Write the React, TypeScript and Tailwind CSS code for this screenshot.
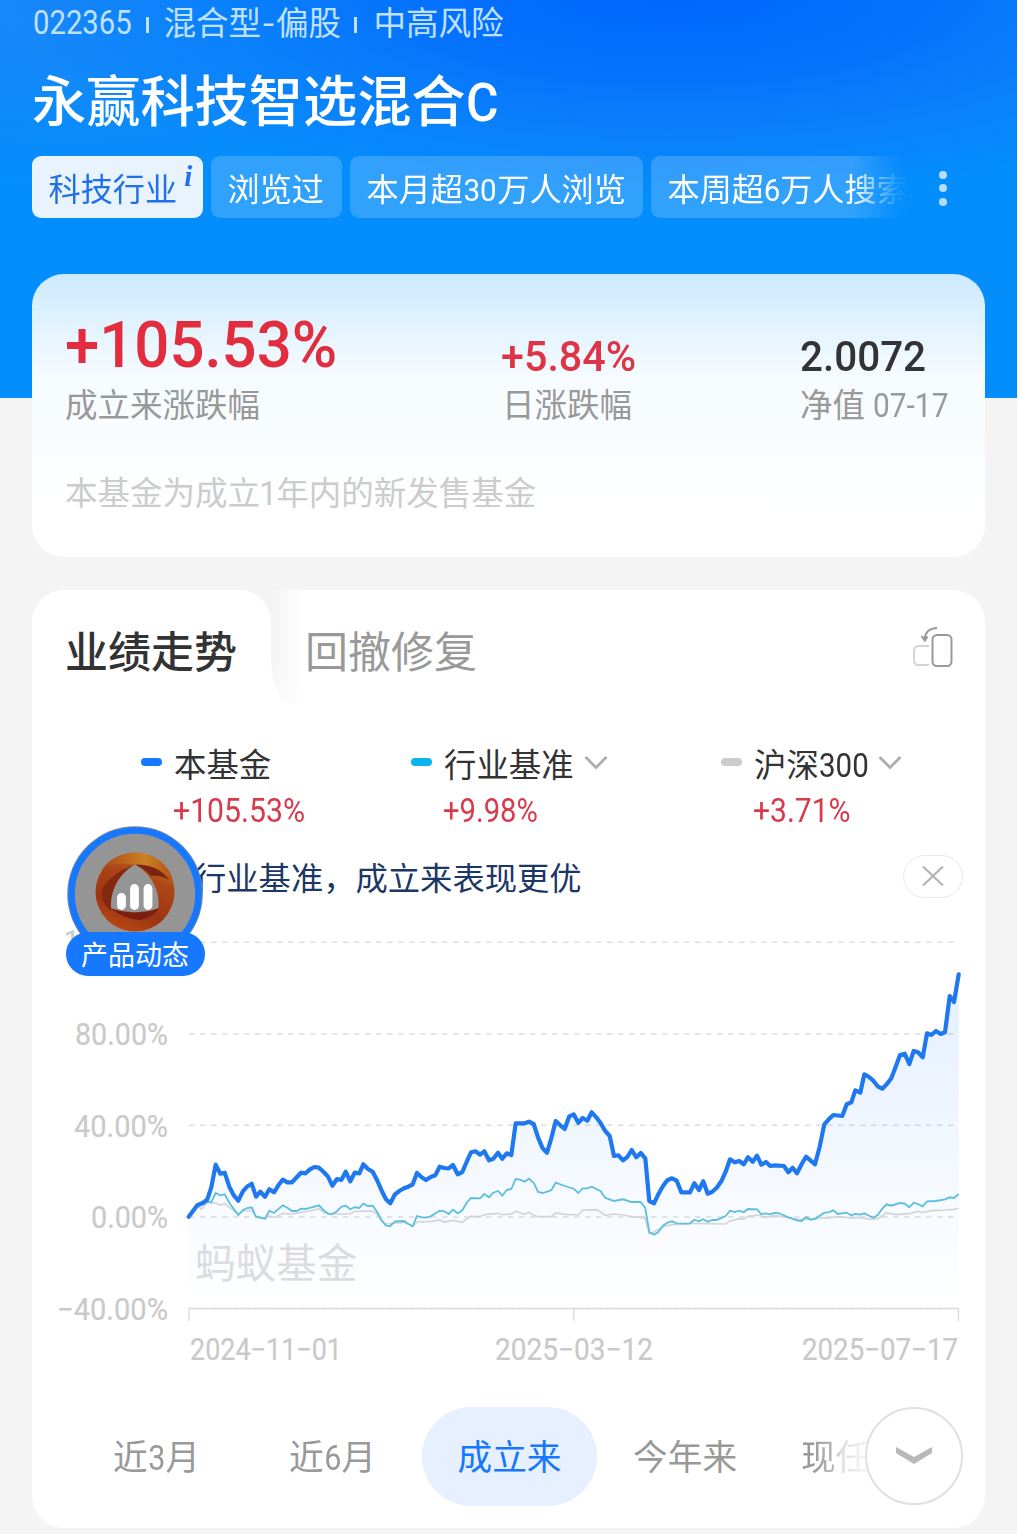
import React from "react";

type Pt = [number, number];

// Series are stored in thirds of a pixel, relative to the origin of each segment.
const seg = (ox: number, oy: number, pts: Pt[]): Pt[] =>
  pts.map(([x, y]) => [ox + x / 3, oy + y / 3]);

const fund: Pt[] = [
  ...seg(170, 1080, [[56,410],[82,376],[100,368],[112,358],[124,322],[137,254],[151,281],[164,278],[178,320],[192,347],[205,362],[218,335],[231,320],[245,311],[258,350],[271,335],[285,350],[298,328],[312,337],[325,316],[338,299],[352,307],[366,307],[380,292],[393,278],[406,280],[420,268],[433,261],[447,263],[461,276],[474,290],[487,317],[501,297],[514,300],[527,275],[541,304],[554,278],[568,280],[580,253],[594,267],[608,275],[621,300],[635,332],[648,358],[661,370],[675,343],[688,333],[702,325],[715,320],[728,313],[741,279],[755,292],[768,300]]),
  ...seg(430, 1080, [[2,291],[16,286],[29,260],[43,264],[56,265],[69,255],[83,283],[97,276],[110,245],[123,217],[137,214],[150,224],[163,214],[177,241],[190,236],[204,218],[217,236],[230,220],[244,225],[257,130],[284,130],[297,125],[311,132],[324,172],[338,205],[351,218],[364,175],[377,123],[391,136],[404,147],[418,109],[431,103],[445,128],[458,114],[472,122],[485,97],[499,112],[512,130],[525,152],[539,168],[552,228],[565,226],[579,241],[592,231],[605,210],[619,232],[632,219],[646,235],[658,363],[672,370],[685,343],[699,318],[712,301],[726,295],[740,302],[754,337],[778,337]]),
  ...seg(690, 950, [[0,727],[13,700],[27,720],[40,694],[53,731],[67,725],[80,713],[94,694],[107,665],[120,628],[134,637],[148,633],[161,643],[174,622],[188,635],[201,617],[214,644],[228,636],[241,648],[255,646],[282,648],[295,667],[308,653],[321,670],[335,642],[348,620],[362,632],[375,643],[389,590],[403,523],[416,508],[430,495],[457,498],[470,463],[484,457],[496,421],[511,428],[523,373],[537,381],[550,392],[563,409],[577,416],[590,403],[604,385],[617,350],[630,315],[644,311],[658,342],[671,303],[684,307],[698,322],[711,250],[724,255],[738,243],[752,252],[765,247],[779,138],[792,156],[806,73]]),
];

const industry: Pt[] = [
  ...seg(170, 1080, [[56,410],[82,378],[100,372],[112,365],[124,366],[137,339],[151,346],[164,343],[178,368],[205,405],[218,391],[231,384],[245,382],[258,410],[285,416],[298,392],[312,399],[338,376],[352,383],[366,393],[380,393],[393,386],[406,387],[447,376],[461,391],[474,401],[487,402],[501,394],[514,380],[527,377],[541,388],[554,382],[568,384],[580,371],[594,378],[608,377],[621,395],[635,421],[648,437],[661,438],[675,424],[702,423],[714,431],[728,439],[741,408],[755,412],[768,413]]),
  ...seg(430, 1080, [[2,409],[29,392],[43,394],[56,402],[69,389],[83,400],[97,391],[110,368],[123,354],[150,355],[163,342],[177,352],[190,338],[204,333],[217,347],[230,330],[244,327],[257,297],[270,299],[284,305],[297,296],[311,308],[324,336],[338,339],[364,331],[377,308],[404,318],[431,326],[445,339],[458,325],[472,325],[485,320],[512,334],[525,353],[552,363],[579,358],[605,366],[632,366],[646,384],[658,456],[672,464],[685,456],[699,437],[712,428],[726,424],[740,430],[776,431]]),
  ...seg(690, 950, [[0,820],[13,809],[27,814],[40,808],[53,815],[67,810],[80,810],[107,798],[120,782],[134,786],[148,782],[161,787],[174,777],[201,778],[214,793],[228,790],[241,793],[255,789],[268,790],[295,802],[321,811],[335,813],[348,801],[362,809],[375,806],[403,788],[416,787],[430,781],[443,792],[470,788],[484,796],[496,792],[511,794],[523,790],[537,797],[550,803],[563,795],[577,776],[590,763],[604,767],[630,759],[644,761],[658,772],[671,758],[684,762],[698,769],[711,754],[738,753],[765,748],[779,742],[792,744],[806,732]]),
];

const csi300: Pt[] = [
  ...seg(170, 1080, [[56,410],[82,378],[95,387],[112,368],[137,369],[151,375],[164,371],[178,382],[205,402],[218,393],[245,391],[258,410],[285,416],[298,408],[312,413],[338,400],[366,402],[393,397],[433,390],[447,386],[461,398],[487,402],[541,402],[554,394],[608,393],[621,403],[635,424],[648,432],[702,427],[728,438],[741,426],[768,425]]),
  ...seg(430, 1080, [[2,425],[29,420],[43,426],[69,421],[97,427],[110,417],[123,409],[150,410],[163,404],[204,400],[217,404],[244,402],[257,394],[284,403],[297,397],[311,406],[324,410],[364,410],[377,399],[404,403],[445,405],[458,390],[499,389],[512,396],[525,406],[552,402],[579,405],[605,410],[632,412],[646,416],[658,462],[672,456],[699,440],[726,434],[776,432]]),
  ...seg(690, 950, [[0,820],[107,822],[120,813],[148,806],[161,807],[174,799],[201,795],[228,802],[255,797],[295,802],[321,808],[375,808],[389,803],[416,804],[443,800],[484,804],[511,802],[537,808],[563,806],[590,789],[617,794],[658,791],[684,784],[698,787],[724,782],[765,780],[792,778],[806,774]]),
];

const line = (pts: Pt[]) =>
  "M" + pts.map(([x, y]) => `${x.toFixed(1)} ${y.toFixed(1)}`).join("L");

function Chevron() {
  return (
    <svg width="24" height="16" viewBox="0 0 24 16" fill="none" className="shrink-0">
      <path d="M1.5 2 L12 12.5 L22.5 2" stroke="#adadad" strokeWidth="2.8" />
    </svg>
  );
}

function Legend({
  swatch,
  name,
  value,
  width,
  arrow,
}: {
  swatch: string;
  name: React.ReactNode;
  value: string;
  width: string;
  arrow?: boolean;
}) {
  return (
    <div className="flex flex-col">
      <div className="flex h-[48px] items-center">
        <span className={`mr-[12px] -mt-[4px] h-2 w-[21px] rounded-full ${swatch}`} />
        <span className="translate-y-[2px] text-[32.4px] leading-[48px] text-[#333]">{name}</span>
        {arrow && (
          <span className="ml-[10px] -mt-[3px] flex">
            <Chevron />
          </span>
        )}
      </div>
      <div className="ml-[32px] h-[46px] text-[33px] leading-[46px] text-[#d63a4b]">
        <span className={`inline-block origin-left ${width}`}>{value}</span>
      </div>
    </div>
  );
}

function Chart() {
  const grid = [942.3, 1034, 1125.3, 1217, 1308.5];
  const yLabels: [string, number, number, number][] = [
    ["120.00%", 64, 952, 104],
    ["80.00%", 75, 1045, 93],
    ["40.00%", 74, 1136.5, 94],
    ["0.00%", 91, 1228, 77],
    ["−40.00%", 57, 1320, 111],
  ];
  const xLabels: [string, number, number][] = [
    ["2024−11−01", 190, 152],
    ["2025−03−12", 495, 158],
    ["2025−07−17", 802, 156],
  ];
  return (
    <svg width="953" height="460" viewBox="32 920 953 460" className="block font-[Roboto,'Noto_Sans_CJK_SC',sans-serif]">
      <defs>
        <linearGradient id="area" x1="0" y1="975" x2="0" y2="1300" gradientUnits="userSpaceOnUse">
          <stop offset="0" stopColor="#1677ff" stopOpacity="0.12" />
          <stop offset="0.6" stopColor="#1677ff" stopOpacity="0.045" />
          <stop offset="1" stopColor="#1677ff" stopOpacity="0.003" />
        </linearGradient>
      </defs>
      {grid.map((y) => (
        <line key={y} x1="189" x2="959" y1={y} y2={y} stroke="#dedede" strokeWidth="1.4" strokeDasharray="5.5 5.5" />
      ))}
      <path d="M189 1321V1308.5H958.5V1321M573.7 1308.5V1321" fill="none" stroke="#dcdcdc" strokeWidth="1.4" />
      <path d={line(fund) + "L958.7 1308L188.7 1308Z"} fill="url(#area)" />
      <text x="195" y="1277.5" fontSize="40.6" fill="#dbdcdf">蚂蚁基金</text>
      <path d={line(csi300)} fill="none" stroke="#d3d4d7" strokeWidth="1.7" />
      <path d={line(industry)} fill="none" stroke="#5bbfdd" strokeWidth="1.8" />
      <path d={line(fund)} fill="none" stroke="#1f78f0" strokeWidth="4.2" strokeLinejoin="round" strokeLinecap="round" />
      {yLabels.map(([t, x, y, w]) => (
        <text key={t} x={x} y={y} fontSize="30.5" fill="#c9c9c9" stroke="#c9c9c9" strokeWidth="0.2" textLength={w} lengthAdjust="spacingAndGlyphs">{t}</text>
      ))}
      {xLabels.map(([t, x, w]) => (
        <text key={t} x={x} y="1359.5" fontSize="30.5" fill="#c9c9c9" stroke="#c9c9c9" strokeWidth="0.2" textLength={w} lengthAdjust="spacingAndGlyphs">{t}</text>
      ))}
    </svg>
  );
}

function ProductBadge() {
  return (
    <div className="absolute left-[33px] top-[236px] flex w-[140px] flex-col items-center">
      <svg width="138" height="138" viewBox="0 0 138 138" className="block">
        <defs>
          <linearGradient id="ringFill" x1="0.7" y1="0" x2="0.3" y2="1">
            <stop offset="0" stopColor="#c87a22" />
            <stop offset="0.3" stopColor="#ae4718" />
            <stop offset="0.7" stopColor="#9c3413" />
            <stop offset="1" stopColor="#b84a12" />
          </linearGradient>
          <linearGradient id="ringTop" x1="0" y1="0" x2="1" y2="0">
            <stop offset="0" stopColor="#a8481a" />
            <stop offset="0.6" stopColor="#cc8024" />
            <stop offset="1" stopColor="#b4541a" />
          </linearGradient>
        </defs>
        <circle cx="69" cy="68" r="67.8" fill="#7f8a99" />
        <circle cx="69" cy="68" r="63.5" fill="#959595" stroke="#1677ff" strokeWidth="6.6" />
        <circle cx="69" cy="66" r="39.5" fill="url(#ringFill)" />
        <path d="M36 44C46 28 68 22 88 31C98 36 105 45 107 55C98 44 84 39 69 39C56 36 45 38 36 44Z" fill="url(#ringTop)" />
        <path d="M69 38.5C83 38 96 43 103 54C98 51 92 49 85 50C80 45 75 41 69 38.5Z" fill="#7c2413" />
        <path d="M69 38.5C52 45 38 55 36 66C35 74 39 80 45 84C44 64 53 48 69 38.5Z" fill="#84280f" />
        <path d="M45 82C58 88 80 88 93 82C90 88 82 92 74 94C62 93 52 89 45 82Z" fill="#7a2010" />
        <path d="M69 38.5C84 47 94 63 92.5 82C80 87.5 58 87.5 45 82C44 63 54 47 69 38.5Z" fill="#959595" />
        <g stroke="#fff" strokeWidth="8.8" strokeLinecap="round">
          <path d="M55.5 71.5V79.5" />
          <path d="M68.5 62.5V79.5" />
          <path d="M82 62.5V79.5" />
        </g>
      </svg>
      <div className="-mt-[32px] flex h-[44px] w-[139px] items-center justify-center rounded-full bg-[#1677ff] text-[27px] leading-[44px] text-white">
        <span className="translate-y-[2px]">产品动态</span>
      </div>
    </div>
  );
}

const tag =
  "flex h-[62px] shrink-0 items-center rounded-[9px] px-[16.5px] pt-[7px] text-[32.2px] leading-[55px] whitespace-nowrap";

export default function App() {
  return (
    <div className="h-[1535px] w-[1018px] overflow-hidden bg-white font-[Roboto,'Noto_Sans_CJK_SC',sans-serif] whitespace-nowrap">
      <div className="flex h-[1534px] w-[1017px] flex-col bg-[#f4f4f4]">
        <header className="h-[398px] shrink-0 bg-[#048efc] bg-[radial-gradient(ellipse_660px_210px_at_670px_-10px,#0067fd_0%,#0470fd_35%,#0a80fb_68%,#048efc00_100%),radial-gradient(ellipse_420px_190px_at_60px_0px,#1a86f8_0%,#048efc00_100%)] px-8">
          <div className="flex h-[47px] items-center text-[32.5px] text-[#bfe1ff]">
            <span className="w-[99px]">
              <span className="inline-block origin-left translate-x-[1px] scale-x-[0.9]">022365</span>
            </span>
            <span className="ml-[15px] h-[16px] w-[2.5px] translate-y-[1px] bg-[#bfe1ff]" />
            <span className="ml-[15px] translate-y-[1px]">
              混合型<span className="inline-block w-[15px] scale-x-125 text-center">-</span>偏股
            </span>
            <span className="ml-[13px] h-[16px] w-[2.5px] translate-y-[1px] bg-[#bfe1ff]" />
            <span className="ml-[17px] translate-y-[1px]">中高风险</span>
          </div>
          <h1 className="h-[109px] text-[54.2px] leading-[112px] font-medium text-white">
            永赢科技智选混合<span className="inline-block origin-left scale-x-[0.92]">C</span>
          </h1>
          <div className="flex items-center">
            <div className="flex w-[879px] gap-[8px] overflow-hidden [mask-image:linear-gradient(to_right,#000_820px,#0006_850px,#0002_864px,transparent_877px)]">
              <div className={`${tag} w-[171px] bg-[#e8f3fe] text-[#2070e8]`}>
                科技行业
                <span className="ml-[7px] -translate-y-[14px] font-['Liberation_Serif'] text-[29px] font-bold italic">i</span>
              </div>
              <div className={`${tag} w-[131px] bg-white/18 text-white`}>浏览过</div>
              <div className={`${tag} w-[293px] bg-white/18 text-white`}>
                本月超<span className="-mx-[1px] inline-block scale-x-[0.92]">30</span>万人浏览
              </div>
              <div className={`${tag} w-[300px] bg-white/18 text-white`}>
                本周超<span className="-mx-[1px] inline-block scale-x-[0.92]">6</span>万人搜索
              </div>
            </div>
            <div className="ml-[28px] flex translate-y-[1px] flex-col gap-[5.5px]">
              <span className="size-2 rounded-full bg-[#b5ddff]" />
              <span className="size-2 rounded-full bg-[#b5ddff]" />
              <span className="size-2 rounded-full bg-[#b5ddff]" />
            </div>
          </div>
        </header>

        <section className="relative mx-8 -mt-[124px] h-[283px] w-[953px] shrink-0 rounded-[32px] bg-[linear-gradient(to_bottom,#cce9ff_0%,#e2f3ff_18%,#f5fbff_36%,#fafdff_60%,#ffffff_85%)] px-[33px] pt-[38px]">
          <div className="flex items-end">
            <div className="w-[436px] shrink-0">
              <div className="h-[66px] text-[65.5px] leading-[66px] font-medium text-[#e12d3e]">
                <span className="inline-block origin-left scale-x-[0.942]">+105.53%</span>
              </div>
            </div>
            <div className="w-[299px] shrink-0">
              <div className="h-[56px] text-[43px] leading-[68px] font-medium text-[#dd3446]">
                <span className="inline-block origin-left scale-x-[0.96]">+5.84%</span>
              </div>
            </div>
            <div className="h-[56px] text-[43px] leading-[68px] font-medium text-[#333]">
              <span className="inline-block origin-left scale-x-[0.94]">2.0072</span>
            </div>
          </div>
          <div className="flex h-[56px] text-[32.5px] leading-[56px] text-[#999]">
            <span className="w-[437px] shrink-0">成立来涨跌幅</span>
            <span className="w-[298px] shrink-0">日涨跌幅</span>
            <span className="shrink-0">
              净值<span className="ml-[8px] inline-block origin-left scale-x-[0.92]">07-17</span>
            </span>
          </div>
          <p className="mt-[32px] text-[32.5px] leading-[56px] text-[#ccc]">
            本基金为成立<span className="-mx-[1px] inline-block">1</span>年内的新发售基金
          </p>
        </section>

        <section className="relative mx-8 mt-[33px] h-[938px] w-[953px] shrink-0 overflow-hidden rounded-[32px] bg-white">
          <div className="flex h-[150px]">
            <div className="relative z-10 flex h-[115px] w-[239px] items-center rounded-tr-[32px] bg-white pl-[33px] text-[43px] font-medium text-[#333]">
              <span className="translate-y-[6px]">业绩走势</span>
            </div>
            <div className="-ml-[32px] h-[115px] w-[66px] bg-[linear-gradient(to_right,#f3f3f3_45%,#f9f9f9_70%,#ffffff)] [clip-path:path('M0_0H66V115H52Q36_113_32_72V34H0Z')] [mask-image:linear-gradient(to_bottom,#000_70%,#0008)]" />
            <div className="flex h-[115px] grow items-center text-[43px] text-[#999]">
              <span className="translate-y-[6px]">回撤修复</span>
            </div>
            <svg width="42" height="44" viewBox="0 0 42 44" fill="none" className="mt-[36px] mr-[31px]">
              <rect x="20.5" y="9" width="19" height="31" rx="4.5" stroke="#999" strokeWidth="2" />
              <path d="M17 20H7Q2 20 2 25V34Q2 39 7 39H17" stroke="#d4d4d4" strokeWidth="2" />
              <path d="M25 2C17 2 13 7 12.6 13.5M9.5 10L12.8 14.5L15.5 10.5" stroke="#999" strokeWidth="2" />
            </svg>
          </div>
          <div className="flex pl-[109px]">
            <div className="w-[270px]">
              <Legend swatch="bg-[#1677ff]" name="本基金" value="+105.53%" width="scale-x-[0.915]" />
            </div>
            <div className="w-[310px]">
              <Legend swatch="bg-[#0cb4ee]" name="行业基准" value="+9.98%" width="scale-x-[0.885]" arrow />
            </div>
            <Legend
              swatch="bg-[#ccc]"
              name={<>沪深<span className="-mr-[5px] inline-block origin-left scale-x-[0.91]">300</span></>}
              value="+3.71%"
              width="scale-x-[0.91]"
              arrow
            />
          </div>
          <div className="flex h-[86px] items-center justify-between pr-[22px] pl-[162px]">
            <span className="translate-y-[2px] text-[32.3px] text-[#1c3766]">行业基准，成立来表现更优</span>
            <span className="flex h-[43px] w-[60px] -translate-y-[1px] items-center justify-center rounded-full border-[1.5px] border-[#e6e9e5]">
              <svg width="22" height="20" viewBox="0 0 22 20" stroke="#b3b6b2" strokeWidth="2.2">
                <path d="M1 0.5L21 19.5M21 0.5L1 19.5" />
              </svg>
            </span>
          </div>
          <Chart />
          <ProductBadge />
          <div className="mt-[2px] flex h-[148px] items-center text-[34.7px] text-[#999]">
            <span className="ml-[81px] w-[176px] translate-y-[2px]">
              近<span className="-mx-[1px] inline-block scale-x-[0.88]">3</span>月
            </span>
            <span className="w-[133px] translate-y-[2px]">
              近<span className="-mx-[1px] inline-block scale-x-[0.88]">6</span>月
            </span>
            <span className="flex h-[99px] w-[175px] items-center justify-center rounded-full bg-[#e7f0fe] text-[#1677ff]">
              <span className="translate-y-[2px]">成立来</span>
            </span>
            <span className="ml-[36px] translate-y-[2px]">今年来</span>
            <span className="-mr-[6px] ml-[64px] w-[70px] translate-y-[2px] [mask-image:linear-gradient(to_right,#000_10px,#000a_34px,#0005_40px,#0002_60px)]">
              现任
            </span>
            <span className="relative flex size-[98px] shrink-0 items-center justify-center rounded-full border-2 border-[#e0e0e0] bg-white">
              <svg width="38" height="20" viewBox="0 0 38 20">
                <path d="M1 1L19 11L37 1V7L19 18L1 7Z" fill="#b8b8b8" />
              </svg>
            </span>
          </div>
        </section>
      </div>
    </div>
  );
}
